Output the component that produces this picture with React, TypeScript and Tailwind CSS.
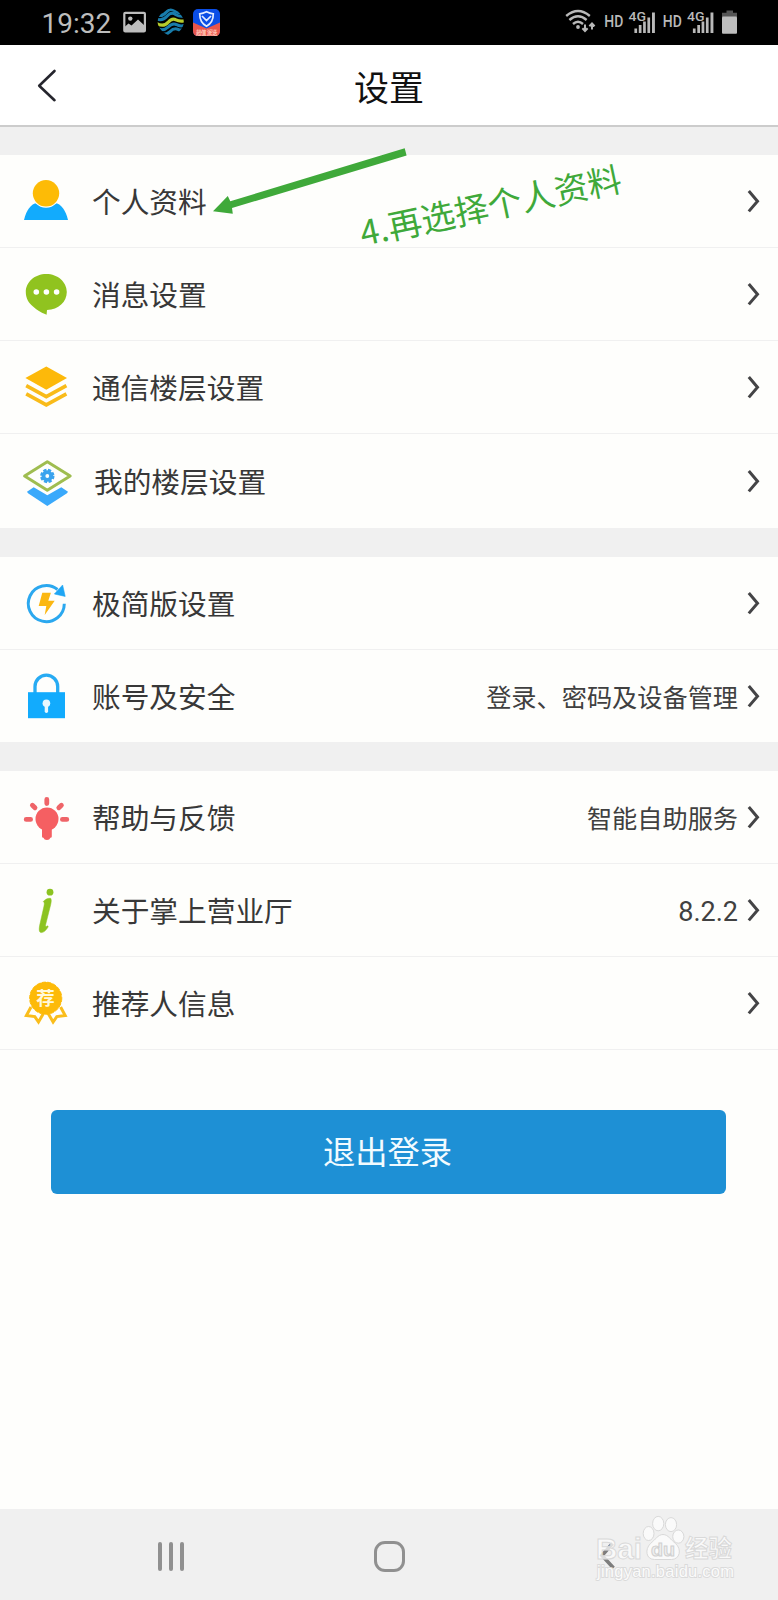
import React from 'react';

interface RowProps {
    icon: React.ReactNode;
    label: string;
    value?: string;
    last?: boolean;
    className?: string;
    labelClass?: string;
    valueClass?: string;
}

const Chevron = () => (
    <svg width="40" height="30" viewBox="0 0 40 30" fill="none">
        <path d="M10.8 5 L19.5 15.2 L10.8 25.4" stroke="#444446" strokeWidth="3" />
    </svg>
);

const Row: React.FC<RowProps> = ({ icon, label, value, last, className = 'h-[93px]', labelClass = '', valueClass = 'text-[25.2px] pb-px' }) => (
    <div className={`flex items-center bg-[#fefefc] ${last ? '' : 'border-b border-[#f0f0f0]'} ${className}`}>
        <svg className="shrink-0 self-start -mb-0.5" width="92" height="93" viewBox="0 0 92 93" fill="none">
            {icon}
        </svg>
        <span className={`text-[28.7px] leading-[40px] text-[#383838] ${labelClass}`}>{label}</span>
        <span className={`ml-auto leading-[36px] text-[#404040] ${valueClass}`}>{value}</span>
        <Chevron />
    </div>
);

const UserIcon = (
    <>
        <path d="M24 65 C26 56 31 48.5 37 48 H55 C61 48.5 66 56 68 65 Z" fill="#12abfd" />
        <circle cx="46" cy="38.3" r="14.4" fill="#fefefc" />
        <circle cx="46" cy="38.3" r="13.2" fill="#fdbb06" />
    </>
);

const MessageIcon = (
    <>
        <path d="M46.3 26 C57.8 26 66.8 34 66.8 44 C66.8 54 58.5 61.5 47 62 L46.6 66.8 C40.5 64.2 37 62 33 58.5 C28.5 55 25.8 50 25.8 44 C25.8 34 34.8 26 46.3 26 Z" fill="#90c31f" />
        <circle cx="36.3" cy="44" r="2.8" fill="#fff" />
        <circle cx="46.4" cy="44" r="2.8" fill="#fff" />
        <circle cx="56.6" cy="44" r="2.8" fill="#fff" />
    </>
);

const LayersIcon = (
    <>
        <path d="M46.3 25.4 L67 37.1 L46.3 48.8 L25.4 37.1 Z" fill="#fdb90a" />
        <path d="M26.2 44.6 L46.3 55.6 L66.4 44.6 M26.2 52.9 L46.3 63.9 L66.4 52.9" stroke="#f9bb1a" strokeWidth="3.6" />
    </>
);

const MyLayersIcon = (
    <>
        <path d="M27 57.8 L33.7 53.3 L47.3 61.3 L61.3 53.3 L68 57.8 L67 59.3 L47.3 72 L28 59.3 Z" fill="#3aa9fb" />
        <path d="M47.3 27.8 L70.2 42 L47.3 56.2 L24.6 42 Z" fill="#fefefc" stroke="#9fbd50" strokeWidth="3" strokeLinejoin="round" />
        <circle cx="47.3" cy="42" r="5.8" fill="#3aa3ee" />
        <circle cx="47.3" cy="42" r="5.9" stroke="#3aa3ee" strokeWidth="2.6" strokeDasharray="3.1 1.53" />
        <circle cx="47.3" cy="42" r="1.9" fill="#fefefc" />
    </>
);

const LiteIcon = (
    <>
        <path d="M64.3 46.7 A18 18 0 1 1 57.5 32.5" stroke="#2ba8ef" strokeWidth="3" />
        <path d="M62.6 28 L65.2 39.4 L54.4 37 Z" fill="#1fa6f4" stroke="#1fa6f4" strokeWidth="0.6" />
        <path d="M42.3 35.7 H50.9 L48.3 43.7 H54.7 L44.7 58 L46.3 48.9 H38.7 Z" fill="#fbb711" />
    </>
);

const LockIcon = (
    <>
        <path d="M35 44 V36.5 A11.3 11.3 0 0 1 57.7 36.5 V44" stroke="#27abf3" strokeWidth="3.3" />
        <rect x="28" y="42.2" width="37" height="26" fill="#12abfd" />
        <circle cx="46.4" cy="53.2" r="3.8" fill="#e9f7fe" />
        <path d="M46.4 54 V61.2" stroke="#e9f7fe" strokeWidth="3.4" strokeLinecap="round" />
    </>
);

const BulbIcon = (
    <>
        <path
            d="M46.8 28.4 V32.6 M26.2 48.4 H30.6 M62.4 48.4 H66.8 M32.4 34.2 L35 36.8 M61.4 34.2 L58.8 36.8"
            stroke="#ef6468" strokeWidth="4.8" strokeLinecap="round"
        />
        <circle cx="47" cy="48" r="11.5" fill="#f55f62" />
        <path d="M42 55 H51.8 V65.6 Q51.8 66.8 50.4 66.8 Q49.6 69 47 69 Q44.2 69 43.4 66.8 Q42 66.8 42 65.6 Z" fill="#f55f62" />
    </>
);

const InfoIcon = (
    <>
        <circle cx="50" cy="28.2" r="3.4" fill="#8cc321" />
        <path
            d="M43.2 37.6 C45.5 35 48.5 33.8 50.8 34.4 C51.8 36 51 39 50.6 41 L45.8 60 C45.2 62.4 45.6 63 47.8 61.8 L48.2 62.8 C46.2 66.2 43.6 68.8 41 68.6 C38.8 68.2 39 64.8 39.6 61.6 L44 42 C44.4 40 44.6 38.6 43.2 37.6 Z"
            fill="#8cc321" stroke="#8cc321" strokeWidth="0.5"
        />
    </>
);

const BadgeIcon = (
    <>
        <path d="M31 50 L26.4 58.6 L34.8 59.6 L38.5 65 L44 55.5 M60.6 50 L65.2 58.6 L56.8 59.6 L53.1 65 L47.6 55.5" stroke="#fabd1b" strokeWidth="3" />
        <circle cx="45.7" cy="41.2" r="16.1" fill="#fdba08" />
        <circle cx="45.7" cy="41.2" r="16.1" stroke="#fdba08" strokeWidth="0.9" strokeDasharray="4 1.5" />
        <text x="45.6" y="47.8" textAnchor="middle" fontSize="18.5" fontWeight="700" fill="#fff8dc">荐</text>
    </>
);

const Signal = () => (
    <g fill="#b9b9b9">
        <text x="604.3" y="27.4" fontSize="15.6" fontWeight="500" textLength="19" lengthAdjust="spacingAndGlyphs">HD</text>
        <text x="628.6" y="20.6" fontSize="13.6" fontWeight="500" textLength="17.5" lengthAdjust="spacingAndGlyphs">4G</text>
        <path d="M634.4 28.4 h2.7 V33 h-2.7 Z M638.8 25 h2.7 V33 h-2.7 Z M643.1 21.6 h2.7 V33 h-2.7 Z M647.4 17.6 h2.7 V33 h-2.7 Z M652 12.4 h2.9 V33 h-2.9 Z" />
    </g>
);

const StatusBar = () => (
    <div className="h-[45px] bg-black flex items-center pl-[41.5px] font-[Roboto,sans-serif]">
        <span className="w-[80px] pt-0.5 text-[28px] leading-[45px] text-[#bdbdbd]">19:32</span>
        <svg width="100" height="45" viewBox="122 0 100 45" fill="none">
            <rect x="124.3" y="12.8" width="20.6" height="18.6" rx="1" stroke="#bdbdbd" strokeWidth="2.2" />
            <circle cx="130.3" cy="18.6" r="2.2" fill="#bdbdbd" />
            <path d="M124.5 27 L128.5 23.5 L131.5 25.5 L138 19.5 L144.5 25.5 V32 H124.5 Z" fill="#bdbdbd" />
            <clipPath id="logo">
                <path d="M170.7 8.6 C176.5 9 183.8 16 183.8 22 C183.8 29 176.5 35 170.7 35.4 C164.5 35 157.6 28 157.6 22 C157.6 15.5 164.5 9 170.7 8.6 Z" />
            </clipPath>
            <g clipPath="url(#logo)" strokeWidth="3" stroke="#187cab">
                <path d="M156 14.5 Q162 17.5 166.5 12 Q170.5 7.5 175 11 Q179 14 184 12" />
                <path d="M156 18.8 Q162.5 21.5 167 16.2 Q171.5 11 176 14.8 Q180 17.5 186 15.5" />
                <path d="M156 28 Q163 32 168 27.2 Q172.5 22.5 176.5 24.6 Q180 27 186 25" />
                <path d="M158 32.6 Q165 36.5 170 31.6 Q174 27.5 178 29.4 Q181 31 186 29" />
                <path d="M156 23.2 Q163.5 27.5 168 22.4 Q172 17.6 176 19.8 Q180 22 186 20.4" stroke="#b5cc2c" strokeWidth="3.2" />
            </g>
            <rect x="193" y="9" width="27" height="27" rx="5" fill="#0b4ee6" />
            <path d="M193 22.6 L206.5 28.4 L220 22.6 V31 Q220 36 215 36 H198 Q193 36 193 31 Z" fill="#e9564c" />
            <path d="M206.5 11.8 Q210 13.6 213.3 13.8 Q213.4 22.5 206.5 26.3 Q199.6 22.5 199.7 13.8 Q203 13.6 206.5 11.8 Z M202 16 L206.5 20.5 L211 16" stroke="#e3ecff" strokeWidth="1.7" />
            <text x="206.5" y="34.6" textAnchor="middle" fontSize="6.5" fontWeight="700" textLength="22" lengthAdjust="spacingAndGlyphs" fill="#ffc3b5">超值派送</text>
        </svg>
        <svg className="ml-auto" width="218" height="45" viewBox="560 0 218 45" fill="none">
            <path d="M566.2 16 Q578 6.2 589.8 16 M569.4 20 Q578 12.4 586.6 20 M573 24 Q578 19.4 583 24" stroke="#b9b9b9" strokeWidth="2.4" />
            <circle cx="578" cy="27" r="1.9" fill="#b9b9b9" />
            <path d="M585 24.5 V30.5 M582.4 28.2 L585 31 L587.6 28.2 M592 29.5 V23.8 M589.4 26.2 L592 23.4 L594.6 26.2" stroke="#b9b9b9" strokeWidth="2" />
            <Signal />
            <g transform="translate(58.5 0)">
                <Signal />
            </g>
            <path d="M726.5 10.5 h6.5 v2.3 h4 V17 h-15 v-4.2 h4.5 Z" fill="#555" />
            <rect x="722" y="16.5" width="15" height="17.3" rx="1" fill="#bdbdbd" />
        </svg>
    </div>
);

const Annotation = () => (
    <svg className="absolute left-0 top-0 pointer-events-none" width="778" height="260" viewBox="0 0 778 260">
        <path d="M213 211.3 L227.8 196 L230.3 201.2 L404.7 148.2 L406.6 155.6 L232 208 L232.8 213.8 Z" fill="#3fa93a" />
        <text x="363" y="246" transform="rotate(-12 363 246)" fontSize="34" fill="#3fa93a">4.再选择个人资料</text>
    </svg>
);

const Watermark = () => (
    <svg className="absolute right-0 bottom-0" width="218" height="91" viewBox="560 1509 218 91" stroke="#d9d9d9" strokeWidth="1">
        <g fill="#fbfbfb" fillOpacity="0.9">
            <ellipse cx="648.6" cy="1533.5" rx="5.4" ry="7" />
            <ellipse cx="658.2" cy="1523.6" rx="5.6" ry="7.2" />
            <ellipse cx="671" cy="1524.6" rx="5.6" ry="7" />
            <ellipse cx="678.3" cy="1536.6" rx="5.6" ry="6.6" />
            <path d="M663 1534.5 C668 1534.5 671 1540 675.5 1543.5 C682 1549 680 1559.5 671.5 1559.5 H654.5 C646 1559.5 644.5 1549.5 650.5 1543.5 C655 1540 658 1534.5 663 1534.5 Z" />
        </g>
        <g fill="#fcfcfc" fillOpacity="0.75" fontFamily="Liberation Sans, Noto Sans CJK SC, sans-serif" fontWeight="700">
            <text x="596" y="1559" fontSize="30" textLength="46" lengthAdjust="spacingAndGlyphs">Bai</text>
            <text x="685" y="1557" fontSize="24" textLength="47" lengthAdjust="spacingAndGlyphs">经验</text>
            <text x="651" y="1556" fontSize="19" textLength="24" lengthAdjust="spacingAndGlyphs" fill="#ececec" stroke="#d0d0d0">du</text>
        </g>
        <g fontSize="16.5" fontFamily="Liberation Sans, sans-serif">
            <text x="597" y="1577" textLength="137" fill="#fbfbfb" stroke="#dadada" strokeWidth="1.8" paintOrder="stroke">jingyan.baidu.com</text>
        </g>
    </svg>
);

const NavBar = () => (
    <div className="relative h-[91px] bg-[#f0f0f0]">
        <div className="w-[654px] h-full mx-auto pt-[3px] flex items-center">
            <div className="flex-1 flex justify-center gap-[7px]">
                <span className="w-1 h-[29px] rounded-full bg-[#909090]" />
                <span className="w-1 h-[29px] rounded-full bg-[#909090]" />
                <span className="w-1 h-[29px] rounded-full bg-[#909090]" />
            </div>
            <div className="flex-1 flex justify-center">
                <span className="w-[31px] h-[31px] rounded-[11px] border-[3.5px] border-[#909090]" />
            </div>
            <div className="flex-1 flex justify-center">
                <svg width="20" height="30" viewBox="0 0 20 30" fill="none">
                    <path d="M15.5 2.5 L5 14.5 L16.5 27" stroke="#7d7d7d" strokeWidth="3.6" />
                </svg>
            </div>
        </div>
        <Watermark />
    </div>
);

const App: React.FC = () => {
    return (
        <div className="relative w-[778px] h-[1600px] overflow-hidden flex flex-col bg-[#fefefc] font-['Noto_Sans_CJK_SC',sans-serif]">
            <StatusBar />
            <header className="h-[82px] bg-white border-b-2 border-[#cccccc] grid grid-cols-3 items-center">
                <svg width="92" height="80" viewBox="0 0 92 80" fill="none">
                    <path d="M54.5 26 L39.2 40.7 L54.5 55.2" stroke="#25252d" strokeWidth="2.6" strokeLinecap="round" strokeLinejoin="round" />
                </svg>
                <h1 className="text-center text-[35px] leading-[50px] text-[#111111] pt-0.5">设置</h1>
            </header>

            <main className="flex-1 flex flex-col">
                <div className="h-[28px] bg-[#f0f0f0]" />
                <section>
                    <Row icon={UserIcon} label="个人资料" />
                    <Row icon={MessageIcon} label="消息设置" />
                    <Row icon={LayersIcon} label="通信楼层设置" />
                    <Row icon={MyLayersIcon} label="我的楼层设置" last className="h-[94px]" labelClass="pl-0.5" />
                </section>
                <div className="h-[29px] bg-[#f0f0f0]" />
                <section>
                    <Row icon={LiteIcon} label="极简版设置" />
                    <Row icon={LockIcon} label="账号及安全" value="登录、密码及设备管理" last className="h-[92px]" />
                </section>
                <div className="h-[29px] bg-[#f0f0f0]" />
                <section>
                    <Row icon={BulbIcon} label="帮助与反馈" value="智能自助服务" />
                    <Row icon={InfoIcon} label="关于掌上营业厅" value="8.2.2" valueClass="font-[Roboto,sans-serif] text-[27px] pt-[3px]" />
                    <Row icon={BadgeIcon} label="推荐人信息" />
                </section>
                <button className="mt-[60px] ml-[51px] mr-[52px] h-[84px] pb-[3px] pr-0.5 rounded-md bg-[#1e90d5] text-[#f2fbff] text-[32.3px] leading-none">
                    退出登录
                </button>
            </main>

            <NavBar />
            <Annotation />
        </div>
    );
};

export default App;
